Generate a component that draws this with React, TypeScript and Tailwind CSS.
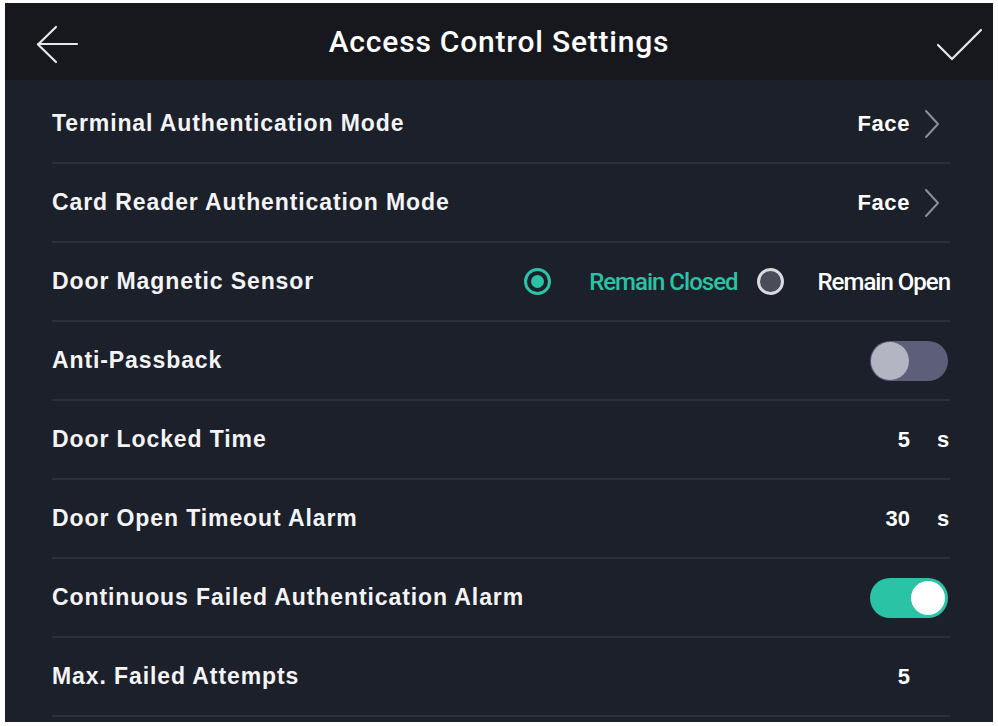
type Row =
  | { kind: "link"; label: string; value: string }
  | { kind: "radio"; label: string }
  | { kind: "toggle"; label: string; on: boolean }
  | { kind: "number"; label: string; value: string; unit?: string };

const rows: Row[] = [
  { kind: "link", label: "Terminal Authentication Mode", value: "Face" },
  { kind: "link", label: "Card Reader Authentication Mode", value: "Face" },
  { kind: "radio", label: "Door Magnetic Sensor" },
  { kind: "toggle", label: "Anti-Passback", on: false },
  { kind: "number", label: "Door Locked Time", value: "5", unit: "s" },
  { kind: "number", label: "Door Open Timeout Alarm", value: "30", unit: "s" },
  { kind: "toggle", label: "Continuous Failed Authentication Alarm", on: true },
  { kind: "number", label: "Max. Failed Attempts", value: "5" },
];

const Toggle = ({ on }: { on: boolean }) =>
  on ? (
    <div className="mr-[2px] flex h-[40px] w-[78px] items-center justify-end rounded-full bg-[#2bc3a5] px-[3px]">
      <div className="h-[34px] w-[34px] rounded-full bg-white" />
    </div>
  ) : (
    <div className="mr-[2px] flex h-[40px] w-[78px] items-center rounded-full bg-[#5c5e7a] px-[1px]">
      <div className="h-[38px] w-[38px] rounded-full bg-[#b4b5c3]" />
    </div>
  );

const RowValue = ({ row }: { row: Row }) => {
  if (row.kind === "link") {
    return (
      <div className="flex items-center">
        <span className="text-[22px] font-bold tracking-[0.6px] text-white">{row.value}</span>
        <svg className="ml-[14px] mr-[10px]" width="16" height="30" viewBox="0 0 16 30" fill="none">
          <path d="M2 2L14 15L2 28" stroke="#8c8f99" strokeWidth="2" strokeLinecap="round" strokeLinejoin="round" />
        </svg>
      </div>
    );
  }
  if (row.kind === "radio") {
    return (
      <div className="flex items-center font-['Roboto',sans-serif] text-[24px] font-medium tracking-[-1px]">
        <div className="flex h-[27px] w-[27px] items-center justify-center rounded-full border-[3px] border-[#2bc3a5]">
          <div className="h-[13px] w-[13px] rounded-full bg-[#2bc3a5]" />
        </div>
        <span className="ml-[38px] text-[#2bc3a5]">Remain Closed</span>
        <div className="ml-[19px] h-[27px] w-[27px] rounded-full border-[3px] border-[#d9d9de] bg-[#4a4c57]" />
        <span className="ml-[34px] text-white">Remain Open</span>
      </div>
    );
  }
  if (row.kind === "toggle") {
    return <Toggle on={row.on} />;
  }
  return (
    <div className="flex items-center text-[22px] font-bold text-white">
      <span>{row.value}</span>
      <span className="ml-[27px] w-[13px]">{row.unit ?? ""}</span>
    </div>
  );
};

export default function App() {
  return (
    <div className="h-[726px] w-[998px] bg-white pb-[4px] pl-[5px] pr-[5px] pt-[3px] font-['Liberation_Sans',Arial,sans-serif]">
      <div className="flex h-full flex-col bg-[#1c202a]">
        <header className="relative flex h-[77px] items-center justify-center bg-[#16181d]">
          <svg className="absolute left-[30px] top-[22px]" width="44" height="40" viewBox="0 0 44 40" fill="none">
            <path d="M42 19H3M21 2L3 19.5L21 37" stroke="#e8e8ea" strokeWidth="2.2" strokeLinecap="round" strokeLinejoin="round" />
          </svg>
          <h1 className="font-['Roboto',sans-serif] text-[30px] font-medium tracking-[0.8px] text-white">
            Access Control Settings
          </h1>
          <svg className="absolute right-[8px] top-[24px]" width="50" height="36" viewBox="0 0 50 36" fill="none">
            <path d="M3 18L17 32L46 3" stroke="#e8e8ea" strokeWidth="2.2" strokeLinecap="round" strokeLinejoin="round" />
          </svg>
        </header>
        <div className="flex flex-col pl-[47px] pr-[43px] pt-[5px]">
          {rows.map((row) => (
            <div
              key={row.label}
              className="flex h-[79px] items-center justify-between border-b-[2px] border-[#2b303b]"
            >
              <span className="text-[23px] font-bold tracking-[0.9px] text-[#f4f4f6]">{row.label}</span>
              <RowValue row={row} />
            </div>
          ))}
        </div>
      </div>
    </div>
  );
}
